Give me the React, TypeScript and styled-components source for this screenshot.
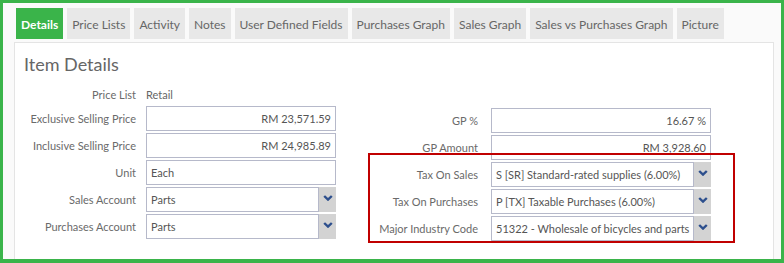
import * as React from "react";
import styled, { createGlobalStyle } from "styled-components";

const GlobalStyle = createGlobalStyle`
  html, body {
    margin: 0;
    padding: 0;
    background: #ffffff;
  }
  body {
    font-family: Lato, "Open Sans", sans-serif;
  }
`;

const Frame = styled.div`
  width: 784px;
  height: 263px;
  box-sizing: border-box;
  border: 3px solid #3ab44a;
  border-bottom-width: 4px;
  background: #fafafa;
  padding: 5px 7px 0 11px;
  overflow: hidden;
  display: flex;
  flex-direction: column;
`;

const TabBar = styled.div`
  display: flex;
  gap: 4px;
  padding-left: 2px;
  height: 31px;
`;

const Tab = styled.div<{ $active?: boolean }>`
  display: flex;
  align-items: center;
  padding: 2px 5px 0;
  font-size: 12px;
  font-weight: ${(p) => (p.$active ? 700 : 400)};
  color: ${(p) => (p.$active ? "#ffffff" : "#666666")};
  background: ${(p) => (p.$active ? "#3ab44a" : "#e8e8e8")};
  white-space: nowrap;
`;

const Panel = styled.div`
  margin-top: 3px;
  flex: 1;
  background: #ffffff;
  border: 1px solid #e4e4e4;
  border-bottom: none;
  padding: 8px 0 0 9px;
`;

const Heading = styled.h2`
  margin: 0;
  font-size: 18px;
  line-height: 26px;
  font-weight: 400;
  color: #666666;
`;

const Form = styled.div`
  display: flex;
  gap: 32px;
  margin-top: 7px;
`;

const Column = styled.div<{ $labelWidth: number; $inputWidth: number; $offset?: number }>`
  position: relative;
  display: grid;
  grid-template-columns: ${(p) => `${p.$labelWidth}px ${p.$inputWidth}px`};
  grid-auto-rows: 25px;
  grid-template-rows: 20px;
  column-gap: ${(p) => (p.$labelWidth > 111 ? 10 : 13)}px;
  row-gap: 2px;
  padding-top: ${(p) => p.$offset ?? 0}px;
  padding-right: ${(p) => (p.$labelWidth > 111 ? 0 : 24)}px;
  align-self: flex-start;
`;

const Label = styled.div`
  font-size: 11px;
  color: #6a6a6a;
  text-align: right;
  align-self: center;
  white-space: nowrap;
`;

const Value = styled.div`
  font-size: 11px;
  color: #666666;
  align-self: center;
`;

const TextBox = styled.div<{ $right?: boolean }>`
  box-sizing: border-box;
  height: 25px;
  border: 1px solid #b6b9ca;
  padding: 0 4px;
  display: flex;
  align-items: center;
  justify-content: ${(p) => (p.$right ? "flex-end" : "flex-start")};
  font-size: 11px;
  color: #555555;
  background: #ffffff;
  white-space: nowrap;
  overflow: hidden;
  flex: 1;
`;

const SelectBox = styled.div`
  display: flex;
  height: 25px;
`;

const ArrowButton = styled.div`
  width: 17px;
  height: 25px;
  background: #d3d3d3;
  display: flex;
  justify-content: center;
  padding-top: 8px;
  box-sizing: border-box;
`;

const Highlight = styled.div`
  position: absolute;
  left: 0;
  right: 0;
  top: 69px;
  height: 90px;
  box-sizing: border-box;
  border: 2px solid #c00000;
  pointer-events: none;
`;

const Chevron = () => (
  <svg width="10" height="6" viewBox="0 0 10 6">
    <polyline
      points="1.2,1 5,4.6 8.8,1"
      fill="none"
      stroke="#2d4f8d"
      strokeWidth="2.4"
      strokeLinejoin="miter"
    />
  </svg>
);

const Select: React.FC<{ value: string }> = ({ value }) => (
  <SelectBox>
    <TextBox>{value}</TextBox>
    <ArrowButton>
      <Chevron />
    </ArrowButton>
  </SelectBox>
);

const tabs = [
  "Details",
  "Price Lists",
  "Activity",
  "Notes",
  "User Defined Fields",
  "Purchases Graph",
  "Sales Graph",
  "Sales vs Purchases Graph",
  "Picture",
];

export default function App() {
  return (
    <>
      <GlobalStyle />
      <Frame>
        <TabBar>
          {tabs.map((t, i) => (
            <Tab key={t} $active={i === 0}>
              {t}
            </Tab>
          ))}
        </TabBar>
        <Panel>
          <Heading>Item Details</Heading>
          <Form>
            <Column $labelWidth={112} $inputWidth={190}>
              <Label>Price List</Label>
              <Value>Retail</Value>
              <Label>Exclusive Selling Price</Label>
              <TextBox $right>RM 23,571.59</TextBox>
              <Label>Inclusive Selling Price</Label>
              <TextBox $right>RM 24,985.89</TextBox>
              <Label>Unit</Label>
              <TextBox>Each</TextBox>
              <Label>Sales Account</Label>
              <Select value="Parts" />
              <Label>Purchases Account</Label>
              <Select value="Parts" />
            </Column>
            <Column $labelWidth={110} $inputWidth={220} $offset={2}>
              <span />
              <span />
              <Label>GP %</Label>
              <TextBox $right>16.67 %</TextBox>
              <Label>GP Amount</Label>
              <TextBox $right>RM 3,928.60</TextBox>
              <Label>Tax On Sales</Label>
              <Select value="S [SR] Standard-rated supplies (6.00%)" />
              <Label>Tax On Purchases</Label>
              <Select value="P [TX] Taxable Purchases (6.00%)" />
              <Label>Major Industry Code</Label>
              <Select value="51322 - Wholesale of bicycles and parts" />
              <Highlight />
            </Column>
          </Form>
        </Panel>
      </Frame>
    </>
  );
}
